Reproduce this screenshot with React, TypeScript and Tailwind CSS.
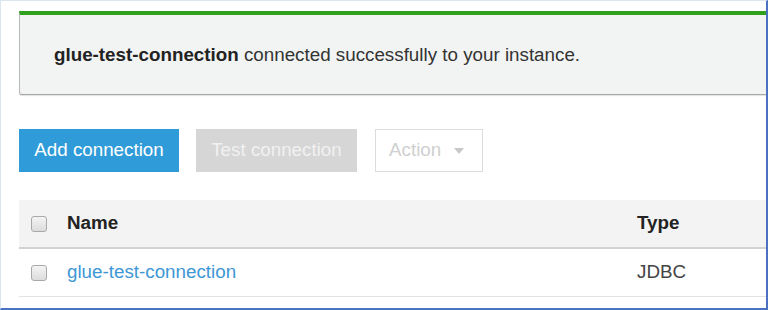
const font = { fontFamily: '"Liberation Sans", Arial, sans-serif' };

function Checkbox() {
  return (
    <span className="inline-block w-[16px] h-[16px] rounded-[3px] border border-[#a9a9a9] bg-gradient-to-b from-[#f4f4f4] to-[#dcdcdc] shrink-0" />
  );
}

export default function App() {
  return (
    <div
      className="w-[768px] h-[310px] overflow-hidden bg-white border-l border-t border-[#dce6f2] border-r-2 border-b-2 border-r-[#4a72c0] border-b-[#4a72c0] pl-[18px] pt-[10px] text-[18.8px] text-[#333]"
      style={font}
    >
      <div className="h-[84px] bg-[#f2f3f3] border-t-[4px] border-t-[#2fa11c] border-l border-l-[#b9b9b9] border-b border-b-[#a8a8a8] rounded-bl-[3px] shadow-[0_1px_1px_rgba(0,0,0,0.12)] flex items-center pl-[34px] pt-px">
        <span>
          <b className="font-bold text-[#222]">glue-test-connection</b> connected successfully to your instance.
        </span>
      </div>

      <div className="flex items-center gap-[17px] mt-[34px]">
        <button className="w-[160px] h-[43px] bg-[#2f9bd8] text-white">Add connection</button>
        <button className="w-[161px] h-[43px] bg-[#d6d6d6] text-[#f1f1f1]">Test connection</button>
        <button className="ml-px w-[108px] h-[43px] border border-[#dcdcdc] text-[#cfcfcf] flex items-center pl-[13px] gap-[13px]">
          Action
          <svg width="10" height="6" viewBox="0 0 10 6">
            <path d="M0 0 L10 0 L5 6 Z" fill="#c8c8c8" />
          </svg>
        </button>
      </div>

      <div className="mt-[28px]">
        <div className="h-[49px] bg-[#f3f3f3] border-b-2 border-[#d2d2d2] flex items-center pl-[12px]">
          <Checkbox />
          <span className="ml-[20px] font-bold text-[#222] w-[570px]">Name</span>
          <span className="font-bold text-[#222]">Type</span>
        </div>
        <div className="h-[48px] border-b border-[#e2e2e2] flex items-center pl-[12px]">
          <Checkbox />
          <span className="ml-[20px] text-[#3e97d5] w-[570px]">glue-test-connection</span>
          <span className="text-[#444]">JDBC</span>
        </div>
      </div>
    </div>
  );
}
